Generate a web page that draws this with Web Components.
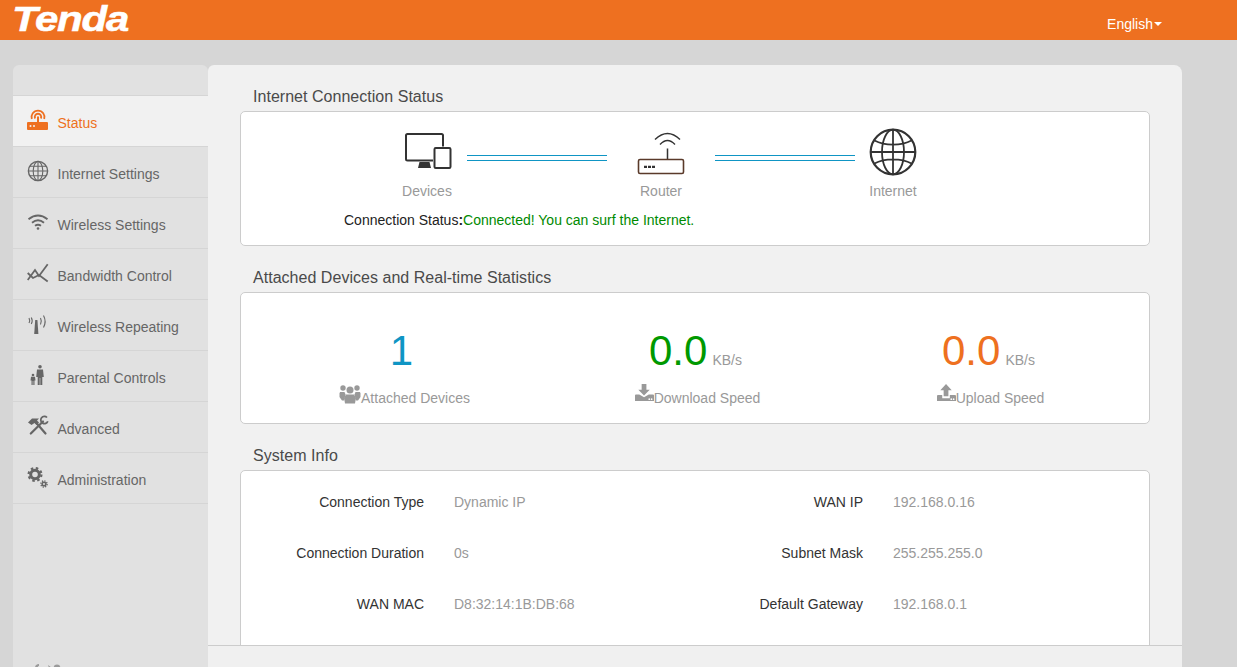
<!DOCTYPE html>
<html>
<head>
<meta charset="utf-8">
<title>Tenda</title>
<style>
    html, body { margin: 0; height: 100%; overflow: hidden; background: #d6d6d6; font-family: "Liberation Sans", Arial, sans-serif; }
</style>
</head>
<body>
<tenda-app></tenda-app>

<script>
const ICONS = {
    status: `<svg width="22" height="22" viewBox="0 0 22 22" fill="none"><g stroke="currentColor" stroke-width="1.800"><path d="M4.800 10A6.500 6.500 0 1 1 17.200 10"/><path d="M8.200 9.500A3.200 3.200 0 1 1 13.800 9.500"/></g><path d="M10 7.500h2v6.500h-2z" fill="currentColor"/><rect x="0" y="13" width="21" height="8" rx="1" fill="currentColor"/><circle cx="3.500" cy="17" r="1" fill="#f1f1f1"/><circle cx="7" cy="17" r="1" fill="#f1f1f1"/></svg>`,
    internet: `<svg width="22" height="22" viewBox="0 0 22 22" fill="none" stroke="currentColor" stroke-width="1.100"><circle cx="11" cy="11" r="9.600" stroke-width="1.400"/><ellipse cx="11" cy="11" rx="4.800" ry="9.600"/><path d="M11 1.400v19.200M1.400 11h19.200M2.800 6.200h16.400M2.800 15.800h16.400"/></svg>`,
    wireless: `<svg width="22" height="22" viewBox="0 0 22 22" fill="none" stroke="currentColor" stroke-width="1.900"><path d="M1.500 8.200Q11 .8 20.500 8.200"/><path d="M5 11.800Q11 6.800 17 11.800"/><path d="M8 14.800Q11 12.800 14 14.800"/><circle cx="11" cy="17.500" r="1.300" fill="currentColor" stroke="none"/></svg>`,
    bandwidth: `<svg width="22" height="22" viewBox="0 0 22 22" fill="none" stroke="currentColor" stroke-width="1.800"><path d="M.7 18L8 8l4 6L20.700 2.300"/><path d="M.7 11L6 16l6-3 8.700 6.500"/></svg>`,
    repeat: `<svg width="22" height="22" viewBox="0 0 22 22" fill="none" stroke="currentColor" stroke-width="1.100"><path d="M8.200 7h2.200l1 14H7.200z" fill="currentColor" stroke="none"/><path d="M2 5c.8 1.600.8 3.500 0 5M4.300 4.500c1.100 2 1.100 4.500 0 6.500M13.500 5c1 2 1 4.500 0 6.500M16.500 2.500c1.900 3.500 1.900 8.500 0 12"/></svg>`,
    parental: `<svg width="22" height="22" viewBox="0 0 22 22" fill="currentColor"><circle cx="13" cy="2.800" r="1.800"/><path d="M10 5.500h6l.8 7.500h-1.500v8h-2v-7h-.600v7h-2v-8H9.200z"/><circle cx="6" cy="11" r="1.300"/><path d="M4 12.800h4l.5 3.700H7.500V21H6.300v-4h-.600v4H4.500v-4.500h-1z"/></svg>`,
    advanced: `<svg width="22" height="22" viewBox="0 0 22 22" fill="none"><path d="M1 7.500L5 3.500h7L10 5.500l2 2-2.500 2.500-2-2-3 2z" fill="currentColor"/><path d="M9 7.500L18.500 18.500" stroke="currentColor" stroke-width="2.200" stroke-linecap="round"/><path d="M16 6.500L3.800 18.500" stroke="currentColor" stroke-width="2.200" stroke-linecap="round"/><path d="M20 2.500A3.600 3.600 0 1 0 20.800 6.200" stroke="currentColor" stroke-width="1.800"/></svg>`,
    admin: `<svg width="22" height="22" viewBox="0 0 22 22" fill="none" stroke="currentColor"><circle cx="8" cy="8.500" r="4.300" stroke-width="3"/><circle cx="8" cy="8.500" r="6.400" stroke-width="2.200" stroke-dasharray="2.500 2.530"/><circle cx="17" cy="18" r="1.800" stroke-width="1.600"/><circle cx="17" cy="18" r="3.100" stroke-width="1.400" stroke-dasharray="1.200 1.230"/></svg>`,
    devices: `<svg width="48" height="36" viewBox="0 0 48 36" fill="none"><path d="M29 27.500H3.500A1.500 1.500 0 0 1 2 26V2.500A1.500 1.500 0 0 1 3.500 1h34A1.500 1.500 0 0 1 39 2.500v11" stroke="#333" stroke-width="2"/><path d="M15.500 29h10l1.500 6H14z" fill="#333"/><rect x="30.500" y="15" width="16" height="20" rx="1.200" fill="#fff" stroke="#333" stroke-width="2"/></svg>`,
    router: `<svg width="48" height="46" viewBox="0 0 48 46" fill="none" stroke="#333"><path d="M18 9.500Q30.500-2.500 43 9.500M23 14.500Q30.500 6.500 38 14.500" stroke-width="1.400"/><path d="M30.500 18.500v11" stroke-width="1.500"/><rect x="1.500" y="29.500" width="45" height="14" rx="1.500" stroke="#5a3a2a" stroke-width="1.600"/><path d="M7 36.800h3M11 36.800h3M15 36.800h3" stroke-width="2.200"/></svg>`,
    globe: `<svg width="48" height="48" viewBox="0 0 48 48" fill="none" stroke="#333" stroke-width="1.800"><circle cx="24" cy="24" r="22.300" stroke-width="2.200"/><ellipse cx="24" cy="24" rx="11" ry="22.300"/><path d="M24 1.700v44.600M1.700 24h44.600M5.500 12.500c10 5.500 27 5.500 37 0M5.500 35.500c10-5.500 27-5.500 37 0"/></svg>`,
    users: `<svg width="22" height="20" viewBox="0 0 22 20" fill="currentColor"><circle cx="4" cy="4" r="2.700"/><circle cx="18" cy="4" r="2.700"/><circle cx="11" cy="6" r="3.500"/><path d="M1 8h4.500l1 2.500-1.500 6H3L.5 13v-3.500z"/><path d="M21 8h-4.500l-1 2.500 1.500 6h2l2.500-3.500v-3.500z"/><path d="M7 10.500h8l2 3.500-1 5.500H6L5 14z"/></svg>`,
    download: `<svg width="19" height="19" viewBox="0 0 20 20" fill="currentColor"><path d="M7 0h5v6h3.500L9.500 12 3.500 6H7z"/><path d="M1 11h3.500L9.500 14l5-3H19a1 1 0 0 1 1 1v6H0v-6a1 1 0 0 1 1-1z"/><circle cx="15" cy="16" r=".9" fill="#fff"/><circle cx="17.500" cy="16" r=".9" fill="#fff"/></svg>`,
    upload: `<svg width="19" height="19" viewBox="0 0 20 20" fill="currentColor"><path d="M9.500 0l6 6.500H12v6.500H7V6.500H3.500z"/><path d="M1 11.500h4.500V15h8v-3.500H19a1 1 0 0 1 1 1V18H0v-5.500a1 1 0 0 1 1-1z"/><circle cx="15" cy="16" r=".9" fill="#fff"/><circle cx="17.500" cy="16" r=".9" fill="#fff"/></svg>`
};

class TendaHeader extends HTMLElement {
    constructor() {
        super();
        this.attachShadow({ mode: 'open' });
        this.shadowRoot.innerHTML = `
            <style>
                :host { display: flex; align-items: flex-start; justify-content: space-between; height: 40px; background: #ee7020; color: #fff; }
                .logo { margin-left: 12px; font: italic bold 35px/37px "Liberation Sans", Arial, sans-serif; letter-spacing: -1px; -webkit-text-stroke: .5px #fff; transform: scaleX(1.200); transform-origin: left center; }
                .lang { margin-right: 75px; font-size: 14px; line-height: 48px; display: flex; align-items: center; }
                .caret { width: 0; height: 0; margin-left: 1px; border: 4px solid transparent; border-top-color: #fff; border-bottom: 0; }
            </style>
            <div class="logo">Tenda</div>
            <div class="lang">English<span class="caret"></span></div>
        `;
    }
}

class NavItem extends HTMLElement {
    constructor() {
        super();
        this.attachShadow({ mode: 'open' });
    }

    connectedCallback() {
        const active = this.hasAttribute('active');
        this.shadowRoot.innerHTML = `
            <style>
                :host { display: flex; align-items: center; height: 50px; border-bottom: 1px solid #d5d5d5; padding-left: 14px; font-size: 14px; color: ${active ? '#ee7020' : '#666'}; background: ${active ? '#f1f1f1' : 'transparent'}; }
                .icon { width: 22px; height: 22px; margin-right: 8.500px; margin-top: -2px; display: block; }
                span { padding-top: 4px; }
            </style>
            <div class="icon">${ICONS[this.getAttribute('icon')]}</div>
            <span><slot></slot></span>
        `;
    }
}

class SideBar extends HTMLElement {
    constructor() {
        super();
        this.attachShadow({ mode: 'open' });
        this.shadowRoot.innerHTML = `
            <style>
                :host { display: block; width: 195px; flex: none; background: #e1e1e1; border-radius: 6px 6px 0 0; }
                .top { height: 30px; border-bottom: 1px solid #d5d5d5; }
                .social { display: block; margin: 160px 0 0 20px; }
            </style>
            <div class="top"></div>
            <slot></slot>
            <svg class="social" width="30" height="14" viewBox="0 0 30 14" fill="#9a9a9a"><path d="M2 14V4c0-2 1-4 4-4v2C5 2 4.500 3 4.500 4v10z"/><path d="M15 1l4 3v3h-2z"/><circle cx="24" cy="4" r="3.400"/></svg>
        `;
    }
}

class StatusCard extends HTMLElement {
    constructor() {
        super();
        this.attachShadow({ mode: 'open' });
    }

    connectedCallback() {
        this.shadowRoot.innerHTML = `
            <style>
                :host { display: block; }
                h2 { margin: 0; padding-left: 13px; height: 30px; font: 16px/32px "Liberation Sans", Arial, sans-serif; letter-spacing: .03px; color: #4a4a4a; }
                .box { background: #fff; border: 1px solid #ccc; border-radius: 5px; height: ${this.getAttribute('box')}px; box-sizing: border-box; }
            </style>
            <h2>${this.getAttribute('heading')}</h2>
            <div class="box"><slot></slot></div>
        `;
    }
}

class ConnectionMap extends HTMLElement {
    constructor() {
        super();
        this.attachShadow({ mode: 'open' });
        this.shadowRoot.innerHTML = `
            <style>
                :host { display: block; font-size: 14px; }
                .row { display: flex; padding: 16px 0 0 146px; }
                .node { display: flex; flex-direction: column; align-items: center; color: #999; flex: none; }
                .pic { height: 55px; box-sizing: border-box; display: flex; align-items: flex-start; }
                .devices { width: 80px; } .router { width: 108px; } .internet { width: 76px; }
                .devices .pic { padding-top: 5px; padding-left: 1px; }
                .router .pic { padding-top: 2px; }
                .link { width: 140px; height: 2px; margin-top: 27px; border-top: 1px solid #0f95c4; border-bottom: 1px solid #0f95c4; padding-top: 2px; box-sizing: content-box; flex: none; }
                .msg { margin: 13px 0 0 103px; color: #222; }
                .msg b { font-weight: normal; color: #008a00; }
            </style>
            <div class="row">
                <div class="node devices"><div class="pic">${ICONS.devices}</div>Devices</div>
                <div class="link"></div>
                <div class="node router"><div class="pic">${ICONS.router}</div>Router</div>
                <div class="link"></div>
                <div class="node internet"><div class="pic">${ICONS.globe}</div>Internet</div>
            </div>
            <div class="msg">Connection Status<strong>:</strong><b>Connected! You can surf the Internet.</b></div>
        `;
    }
}

class StatBlock extends HTMLElement {
    constructor() {
        super();
        this.attachShadow({ mode: 'open' });
    }

    connectedCallback() {
        const unit = this.getAttribute('unit');
        this.shadowRoot.innerHTML = `
            <style>
                :host { display: flex; flex-direction: column; align-items: center; color: #999; font-size: 14px; padding-top: 26px; }
                .num { height: 63px; line-height: 63px; white-space: nowrap; padding-left: ${unit ? 2 : 0}px; }
                .num b { font-weight: normal; font-size: 42px; color: ${this.getAttribute('color')}; }
                .num i { font-style: normal; margin-left: 5px; }
                .cap { display: flex; align-items: flex-end; height: 24px; margin-left: 6px; }
                .cap div { height: 20px; margin-bottom: 2px; display: block; }
                .cap svg { display: block; }
            </style>
            <div class="num"><b>${this.getAttribute('value')}</b>${unit ? `<i>${unit}</i>` : ''}</div>
            <div class="cap"><div>${ICONS[this.getAttribute('icon')]}</div><span><slot></slot></span></div>
        `;
    }
}

class InfoRow extends HTMLElement {
    constructor() {
        super();
        this.attachShadow({ mode: 'open' });
    }

    connectedCallback() {
        this.shadowRoot.innerHTML = `
            <style>
                :host { display: flex; height: 51px; align-items: center; font-size: 14px; }
                .k { width: 170px; text-align: right; color: #333; margin-right: 30px; }
                .v { color: #999; }
            </style>
            <div class="k">${this.getAttribute('label')}</div>
            <div class="v"><slot></slot></div>
        `;
    }
}

class TendaApp extends HTMLElement {
    constructor() {
        super();
        this.attachShadow({ mode: 'open' });
        this.shadowRoot.innerHTML = `
            <style>
                :host { display: block; height: 667px; overflow: hidden; }
                .wrap { display: flex; padding: 25px 0 0 13px; height: 602px; }
                main { position: relative; width: 974px; flex: none; height: 602px; overflow: hidden; background: #f1f1f1; border-radius: 6px 8px 0 0; box-sizing: border-box; padding: 16px 32px 0; display: flex; flex-direction: column; gap: 16px; }
                .stats { display: grid; grid-template-columns: repeat(3, 293px); padding: 0 14px; }
                .info { display: grid; grid-template-columns: repeat(2, 439px); padding: 5px 0 0 13px; }
                footer { position: absolute; left: 0; right: 0; bottom: 0; height: 21px; background: #f0f0f0; border-top: 1px solid #ccc; }
            </style>
            <tenda-header></tenda-header>
            <div class="wrap">
                <side-bar>
                    <nav-item icon="status" active>Status</nav-item>
                    <nav-item icon="internet">Internet Settings</nav-item>
                    <nav-item icon="wireless">Wireless Settings</nav-item>
                    <nav-item icon="bandwidth">Bandwidth Control</nav-item>
                    <nav-item icon="repeat">Wireless Repeating</nav-item>
                    <nav-item icon="parental">Parental Controls</nav-item>
                    <nav-item icon="advanced">Advanced</nav-item>
                    <nav-item icon="admin">Administration</nav-item>
                </side-bar>
                <main>
                    <status-card heading="Internet Connection Status" box="135"><connection-map></connection-map></status-card>
                    <status-card heading="Attached Devices and Real-time Statistics" box="132">
                        <div class="stats">
                            <stat-block value="1" color="#0f95c4" icon="users">Attached Devices</stat-block>
                            <stat-block value="0.0" unit="KB/s" color="#090" icon="download">Download Speed</stat-block>
                            <stat-block value="0.0" unit="KB/s" color="#ee7020" icon="upload">Upload Speed</stat-block>
                        </div>
                    </status-card>
                    <status-card heading="System Info" box="300">
                        <div class="info">
                            <info-row label="Connection Type">Dynamic IP</info-row>
                            <info-row label="WAN IP">192.168.0.16</info-row>
                            <info-row label="Connection Duration">0s</info-row>
                            <info-row label="Subnet Mask">255.255.255.0</info-row>
                            <info-row label="WAN MAC">D8:32:14:1B:DB:68</info-row>
                            <info-row label="Default Gateway">192.168.0.1</info-row>
                        </div>
                    </status-card>
                    <footer></footer>
                </main>
            </div>
        `;
    }
}

customElements.define('tenda-header', TendaHeader);
customElements.define('nav-item', NavItem);
customElements.define('side-bar', SideBar);
customElements.define('status-card', StatusCard);
customElements.define('connection-map', ConnectionMap);
customElements.define('stat-block', StatBlock);
customElements.define('info-row', InfoRow);
customElements.define('tenda-app', TendaApp);
</script>
</body>
</html>
